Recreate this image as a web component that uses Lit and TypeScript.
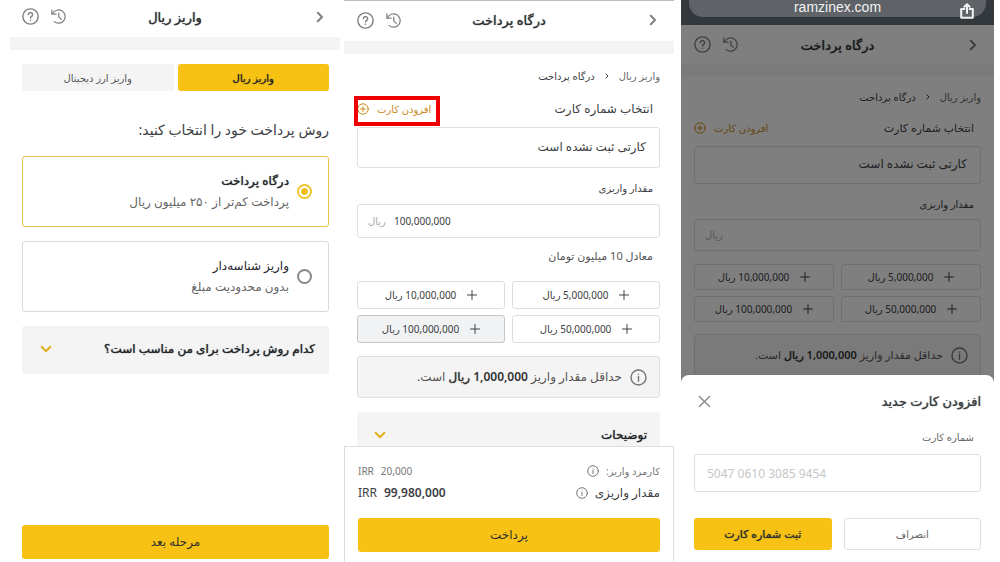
import { LitElement, html, css, nothing } from "lit";
import { customElement, property } from "lit/decorators.js";

const question = html`<svg class="icon" viewBox="0 0 24 24" aria-hidden="true">
  <circle cx="12" cy="12" r="10.8" />
  <path d="M9 9.4a3 3 0 1 1 4.6 2.5c-1.1.7-1.6 1.2-1.6 2.3" />
  <circle class="fill" cx="12" cy="17.2" r="1.1" />
</svg>`;

const history = html`<svg class="icon" viewBox="0 0 24 24" aria-hidden="true">
  <path d="M2.4 7.6A10.6 10.6 0 1 1 5.2 20.2" />
  <path d="M1.4 1.4v6.8h6.8" />
  <path d="M12.4 6.4v6.2l4 4" />
</svg>`;

const chevronEnd = html`<svg class="icon chevron" viewBox="0 0 16 16" aria-hidden="true">
  <path d="M5.8 3.8 10 8l-4.2 4.2" />
</svg>`;

const chevronDown = html`<svg class="caret" viewBox="0 0 12 12" aria-hidden="true">
  <path d="M1.6 3.8 6 8.2l4.4-4.4" />
</svg>`;

const info = html`<svg class="info" viewBox="0 0 24 24" aria-hidden="true">
  <circle cx="12" cy="12" r="10.6" />
  <path d="M12 10.6v6.6" />
  <circle class="fill" cx="12" cy="7.4" r="1" />
</svg>`;

const plusCircle = html`<svg class="plus-circle" viewBox="0 0 24 24" aria-hidden="true">
  <circle cx="12" cy="12" r="10.4" />
  <path d="M12 7v10M7 12h10" />
</svg>`;

const plus = html`<svg class="plus" viewBox="0 0 10 10" aria-hidden="true">
  <path d="M5 .5v9M.5 5h9" />
</svg>`;

const share = html`<svg class="share" viewBox="0 0 14 16" aria-hidden="true">
  <path d="M4.4 6H1.2v8.8h11.6V6H9.6M7 10V1.4M4.4 3.8 7 1.2l2.6 2.6" />
</svg>`;

const shared = css`
  :host {
    display: block;
    color: #3c4043;
    font-family: "Noto Sans", "DejaVu Sans", sans-serif;
    font-size: 12px;
    line-height: 16px;
  }
  * {
    box-sizing: border-box;
  }
  button,
  input {
    font: inherit;
    color: inherit;
    margin: 0;
    padding: 0;
    border: 0;
    background: none;
  }
  button {
    cursor: pointer;
  }
  h1,
  h2,
  p {
    margin: 0;
    font-weight: 400;
  }
  svg {
    display: block;
    flex: none;
    fill: none;
    stroke: currentColor;
    stroke-linecap: round;
    stroke-linejoin: round;
  }
  svg .fill {
    fill: currentColor;
    stroke: none;
  }
  .medium {
    text-shadow: 0 0 1px currentColor;
  }
  .caret {
    width: 12px;
    height: 12px;
    color: #e0b020;
    stroke-width: 2;
  }
  .info {
    width: 17px;
    height: 17px;
    color: #777;
    stroke-width: 2;
  }
  .primary {
    border-radius: 3px;
    background: #f7c213;
    color: #2f2f2f;
  }
  .accordion {
    display: flex;
    align-items: center;
    justify-content: space-between;
    width: 100%;
    border-radius: 3px;
    background: #f4f4f4;
    color: #24262b;
  }
`;

@customElement("screen-header")
export class ScreenHeader extends LitElement {
  @property() heading = "";

  static styles = [
    shared,
    css`
      header {
        display: grid;
        grid-template-columns: 1fr auto 1fr;
        align-items: center;
        height: var(--header-height, 37px);
        padding: 0 var(--gutter, 12px) var(--header-lift, 0px);
        background: #fff;
      }
      h1 {
        color: #303236;
        font-size: 13px;
        line-height: 20px;
      }
      .back {
        justify-self: start;
      }
      .tools {
        display: flex;
        justify-content: flex-end;
        gap: 11px;
      }
      .icon {
        width: 17px;
        height: 17px;
        color: #808080;
        stroke-width: 2;
      }
      .chevron {
        width: 16px;
        height: 16px;
      }
      .tools button:first-child .icon {
        padding: 1px;
      }
      .band {
        height: var(--band-height, 13px);
        background: #f4f4f4;
      }
    `,
  ];

  render() {
    return html`
      <header>
        <button class="back" aria-label="بازگشت">${chevronEnd}</button>
        <h1 class="medium">${this.heading}</h1>
        <div class="tools">
          <button aria-label="تاریخچه">${history}</button>
          <button aria-label="راهنما">${question}</button>
        </div>
      </header>
      <div class="band"></div>
    `;
  }
}

@customElement("method-screen")
export class MethodScreen extends LitElement {
  static styles = [
    shared,
    css`
      :host {
        display: flex;
        flex-direction: column;
        --header-lift: 4px;
      }
      main {
        flex: 1;
        display: flex;
        flex-direction: column;
        padding: 14px 11px 3px 12px;
      }
      .tabs {
        display: grid;
        grid-template-columns: 1fr 1fr;
        gap: 4px;
      }
      .tabs button {
        height: 27px;
        border-radius: 3px;
        background: #f4f4f4;
        font-size: 10px;
        color: #555;
      }
      .tabs .active {
        background: #f7c213;
        color: #222;
      }
      h2 {
        margin: 29px 0 16px;
        font-size: 14px;
        line-height: 20px;
      }
      .method {
        display: flex;
        align-items: center;
        gap: 8px;
        height: 71px;
        margin-bottom: 14px;
        padding: 0 16px 1px;
        border: 1px solid #d9d9dc;
        border-radius: 3px;
      }
      .method:has(input:checked) {
        border-color: #e6c54a;
      }
      input {
        appearance: none;
        width: 15px;
        height: 15px;
        border: 2px solid #888;
        border-radius: 50%;
      }
      input:checked {
        border-color: #efc62e;
        background: radial-gradient(#f5bf18 0 3px, transparent 4px);
      }
      .name,
      .detail {
        display: block;
        line-height: 21px;
      }
      .name {
        color: #24262b;
      }
      .detail {
        color: #666;
      }
      .accordion {
        height: 48px;
        padding: 0 14px 2px 18px;
      }
      .next {
        height: 34px;
        margin-top: auto;
      }
    `,
  ];

  render() {
    return html`
      <screen-header heading="واریز ریال"></screen-header>
      <main>
        <nav class="tabs">
          <button class="active medium">واریز ریال</button>
          <button>واریز ارز دیجیتال</button>
        </nav>
        <h2>روش پرداخت خود را انتخاب کنید:</h2>
        <label class="method">
          <input type="radio" name="method" checked />
          <span>
            <span class="name medium">درگاه پرداخت</span>
            <span class="detail">پرداخت کم‌تر از ۲۵۰ میلیون ریال</span>
          </span>
        </label>
        <label class="method">
          <input type="radio" name="method" />
          <span>
            <span class="name">واریز شناسه‌دار</span>
            <span class="detail">بدون محدودیت مبلغ</span>
          </span>
        </label>
        <button class="accordion medium">کدام روش پرداخت برای من مناسب است؟ ${chevronDown}</button>
        <button class="primary next">مرحله بعد</button>
      </main>
    `;
  }
}

@customElement("gateway-form")
export class GatewayForm extends LitElement {
  @property() amount = "";
  @property() equivalent = "";
  @property({ type: Boolean }) highlighted = false;

  static styles = [
    shared,
    css`
      main {
        padding: var(--top-space, 14px) var(--start-space, 14px) 0 13px;
        background: #fff;
      }
      .crumbs {
        display: flex;
        align-items: center;
        gap: 8px;
        font-size: 10px;
      }
      .crumbs a {
        color: #666;
        text-decoration: none;
      }
      .crumbs .icon {
        width: 8px;
        height: 8px;
        stroke-width: 2;
      }
      .row {
        display: flex;
        justify-content: space-between;
        margin: var(--row-space, 17px) 0 10px;
        padding-inline-start: 7px;
        font-size: var(--text-size, 12px);
      }
      .add {
        position: relative;
        display: flex;
        align-items: center;
        gap: 8px;
        color: #c98a1b;
        font-size: 10px;
      }
      .plus-circle {
        width: 12px;
        height: 12px;
        stroke-width: 2;
      }
      .add.marked::after {
        content: "";
        position: absolute;
        inset: -5px -9px -9px -3px;
        border: 4px solid #ee0000;
      }
      .cards {
        display: flex;
        align-items: center;
        height: var(--card-height, 41px);
        padding: 0 13px 2px;
        border: 1px solid #e0e0e2;
        border-radius: 3px;
      }
      .label {
        display: block;
        margin: 12px 7px var(--label-space, 8px);
        font-size: 10px;
      }
      .amount {
        display: flex;
        direction: ltr;
        align-items: center;
        gap: 8px;
        height: var(--input-height, 34px);
        padding: 0 10px;
        border: 1px solid #e0e0e2;
        border-radius: 3px;
        font-size: 10px;
      }
      .amount span {
        color: #aaa;
      }
      .amount input {
        flex: 1;
        min-width: 0;
      }
      .equivalent {
        margin: 10px 7px 17px;
        font-size: 11px;
        color: #555;
      }
      .presets {
        display: grid;
        grid-template-columns: 1fr 1fr;
        gap: 6px 7px;
        margin: 13px 0 var(--notice-space, 13px);
        font-size: 10px;
      }
      .presets button {
        display: flex;
        align-items: center;
        justify-content: center;
        gap: 11px;
        height: var(--preset-height, 28px);
        border: 1px solid #dededf;
        border-radius: 3px;
      }
      .presets .chosen {
        border-color: #c4c6c8;
        background: #f1f2f3;
      }
      .plus {
        width: 10px;
        height: 10px;
      }
      .notice {
        display: flex;
        align-items: center;
        gap: 8px;
        height: var(--notice-height, 42px);
        padding: 0 12px;
        border: 1px solid #dededf;
        border-radius: 3px;
        background: #f4f4f4;
        color: #555;
        font-size: var(--text-size, 12px);
      }
      .notice b {
        color: #333;
        font-weight: 600;
      }
      .notice span {
        color: #333;
      }
    `,
  ];

  render() {
    const presets = ["5,000,000", "10,000,000", "50,000,000", "100,000,000"];
    return html`
      <main>
        <nav class="crumbs">
          <a href="#">واریز ریال</a>
          ${chevronEnd}
          <span>درگاه پرداخت</span>
        </nav>
        <div class="row">
          <span>انتخاب شماره کارت</span>
          <button class="add ${this.highlighted ? "marked" : ""}">افزودن کارت ${plusCircle}</button>
        </div>
        <div class="cards">کارتی ثبت نشده است</div>
        <label class="label" for="amount">مقدار واریزی</label>
        <div class="amount">
          <span>ریال</span>
          <input id="amount" inputmode="numeric" .value=${this.amount} />
        </div>
        ${this.equivalent ? html`<p class="equivalent">${this.equivalent}</p>` : nothing}
        <div class="presets">
          ${presets.map(
            (value) => html`<button class=${value === this.amount ? "chosen" : ""}>
              ${plus}<span>${value} ریال</span>
            </button>`
          )}
        </div>
        <div class="notice">
          ${info}
          <p>حداقل مقدار واریز <b>1,000,000</b> <span class="medium">ریال</span> است.</p>
        </div>
      </main>
    `;
  }
}

@customElement("gateway-screen")
export class GatewayScreen extends LitElement {
  static styles = [
    shared,
    css`
      :host {
        display: flex;
        flex-direction: column;
        min-height: 0;
        border-top: 1px solid #bdbdbd;
        --header-height: 40px;
        --header-lift: 2px;
        --gutter: 13px;
      }
      .scroll {
        flex: 1;
        min-height: 0;
        overflow: hidden;
      }
      .accordion {
        width: auto;
        height: 46px;
        margin: 14px 14px 0 13px;
        padding: 0 13px 0 17px;
      }
      .more {
        display: grid;
      }
      footer {
        padding: 14px 13px 10px;
        border: 1px solid #dededf;
        border-bottom: 0;
        background: #fff;
      }
      .line {
        display: flex;
        justify-content: space-between;
        line-height: 20px;
        font-size: 10px;
        color: #777;
      }
      .line span {
        display: flex;
        align-items: center;
        gap: 7px;
      }
      .line .value {
        direction: ltr;
      }
      .line .info {
        width: 12px;
        height: 12px;
      }
      .total {
        margin-top: 2px;
        color: #3c4043;
        font-size: 12px;
      }
      .total b {
        font-weight: 600;
      }
      .primary {
        width: 100%;
        height: 34px;
        margin-top: 15px;
      }
    `,
  ];

  render() {
    return html`
      <screen-header heading="درگاه پرداخت"></screen-header>
      <div class="scroll">
        <gateway-form amount="100,000,000" equivalent="معادل 10 میلیون تومان" highlighted></gateway-form>
        <div class="more"><button class="accordion medium">توضیحات ${chevronDown}</button></div>
      </div>
      <footer>
        <div class="line">
          <span>کارمزد واریز: ${info}</span>
          <span class="value"><span>IRR</span><span>20,000</span></span>
        </div>
        <div class="line total">
          <span>مقدار واریزی ${info}</span>
          <span class="value"><span>IRR</span><b>99,980,000</b></span>
        </div>
        <button class="primary">پرداخت</button>
      </footer>
    `;
  }
}

@customElement("card-screen")
export class CardScreen extends LitElement {
  static styles = [
    shared,
    css`
      :host {
        display: flex;
        flex-direction: column;
        min-height: 0;
        --header-height: 39px;
        --gutter: 13px;
        --band-height: 12px;
        --top-space: 13px;
        --start-space: 13px;
        --row-space: 15px;
        --card-height: 38px;
        --label-space: 7px;
        --input-height: 32px;
        --preset-height: 26px;
        --notice-space: 12px;
        --notice-height: 42px;
        --text-size: 11px;
      }
      .browser {
        height: 25px;
        padding: 0 8px 8px;
        background: #33383c;
      }
      .address {
        display: grid;
        grid-template-columns: 1fr auto 1fr;
        align-items: end;
        height: 17px;
        padding: 0 12px 5px;
        border-radius: 0 0 14px 14px;
        background: #5f6368;
        color: #f2f2f2;
        font-family: "Liberation Sans", sans-serif;
        font-size: 14px;
      }
      .address span {
        padding-bottom: 2px;
        line-height: 14px;
        margin-bottom: 3px;
      }
      .share {
        width: 14px;
        height: 16px;
        stroke-width: 2;
      }
      .dimmed {
        position: relative;
        flex: 1;
        min-height: 0;
        overflow: hidden;
        background: #fff;
      }
      .dimmed::after {
        content: "";
        position: absolute;
        inset: 0;
        background: rgba(0, 0, 0, 0.5);
      }
      .sheet {
        position: relative;
        margin-top: -8px;
        padding: 16px 13px 12px;
        border-radius: 8px 8px 0 0;
        background: #fff;
      }
      .top {
        display: flex;
        align-items: center;
        justify-content: space-between;
        padding-left: 4px;
      }
      h2 {
        font-size: 13px;
        line-height: 20px;
      }
      .close {
        width: 13px;
        height: 13px;
        color: #888;
        stroke-width: 1.5;
      }
      label {
        display: block;
        margin: 18px 7px 9px;
        font-size: 10px;
        color: #666;
      }
      input {
        display: block;
        direction: ltr;
        width: 100%;
        height: 38px;
        padding: 0 12px;
        border: 1px solid #e0e0e2;
        border-radius: 3px;
      }
      input::placeholder {
        color: #c6c6c6;
      }
      .actions {
        display: grid;
        grid-template-columns: 1fr 1fr;
        gap: 12px;
        margin-top: 26px;
      }
      .actions button {
        height: 32px;
        font-size: 11px;
      }
      .actions .cancel {
        border: 1px solid #e0e0e2;
        border-radius: 3px;
        color: #666;
        font-size: 10px;
      }
    `,
  ];

  render() {
    return html`
      <div class="browser">
        <div class="address">
          <button aria-label="اشتراک‌گذاری">${share}</button>
          <span>ramzinex.com</span>
        </div>
      </div>
      <div class="dimmed">
        <screen-header heading="درگاه پرداخت"></screen-header>
        <gateway-form></gateway-form>
      </div>
      <section class="sheet">
        <div class="top">
          <h2 class="medium">افزودن کارت جدید</h2>
          <button aria-label="بستن">
            <svg class="close" viewBox="0 0 14 14" aria-hidden="true"><path d="M1.5 1.5l11 11M12.5 1.5l-11 11" /></svg>
          </button>
        </div>
        <label for="card">شماره کارت</label>
        <input id="card" placeholder="5047 0610 3085 9454" />
        <div class="actions">
          <button class="cancel">انصراف</button>
          <button class="primary medium">ثبت شماره کارت</button>
        </div>
      </section>
    `;
  }
}

@customElement("app-root")
export class AppRoot extends LitElement {
  static styles = css`
    :host {
      display: grid;
      grid-template-columns: 330fr 330fr 316fr;
      grid-template-rows: 100vh;
      column-gap: 4px;
      padding: 0 6px 0 10px;
      box-sizing: border-box;
      direction: ltr;
      background: #fff;
    }
    method-screen,
    gateway-screen,
    card-screen {
      direction: rtl;
      min-width: 0;
    }
    card-screen {
      margin-left: 3px;
    }
  `;

  render() {
    return html`
      <method-screen></method-screen>
      <gateway-screen></gateway-screen>
      <card-screen></card-screen>
    `;
  }
}
